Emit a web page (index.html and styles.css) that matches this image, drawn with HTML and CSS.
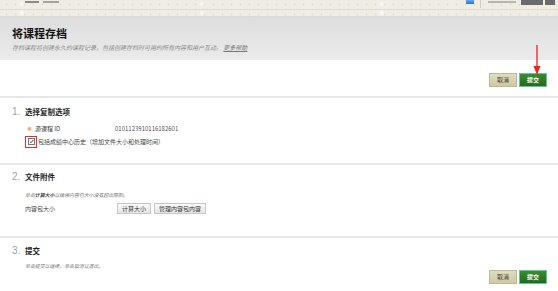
FILE: index.html
```html
<!DOCTYPE html>
<html lang="zh-CN">
<head>
<meta charset="utf-8">
<title>将课程存档</title>
<link rel="stylesheet" href="styles.css">
</head>
<body>
<div class="page">
  <div class="topbar">
    <div class="tb-row1">
      <div class="tb-left"><span class="tb-bar b1"></span><span class="tb-bar b2"></span></div>
      <div class="tb-right">
        <span class="tb-icon"></span>
        <span class="tb-sep"></span>
        <span class="tb-bar b3"></span>
        <span class="tb-dark d1"></span>
        <span class="tb-dark d2"></span>
      </div>
    </div>
    <div class="tb-row2"></div>
  </div>

  <div class="pagehead">
    <h1 class="title">将课程存档</h1>
    <p class="sub">存档课程将创建永久的课程记录，包括创建存档时可用的所有内容和用户互动。 <a class="help">更多帮助</a></p>
  </div>

  <div class="actions top-actions">
    <button class="btn btn-cancel">取消</button>
    <button class="btn btn-submit">提交</button>
    <svg class="arrow" width="10" height="32" viewBox="0 0 10 32">
      <line x1="5" y1="0" x2="5" y2="24" stroke="#e8251e" stroke-width="1.3"/>
      <polygon points="1.5,21 8.5,21 5,30" fill="#e8251e"/>
    </svg>
  </div>

  <section class="step step1">
    <div class="step-head"><span class="num">1.</span><span class="step-title">选择复制选项</span></div>
    <div class="row row-id">
      <span class="label"><span class="req">✻</span>源课程 ID</span>
      <span class="value">0101123910116182601</span>
    </div>
    <div class="row row-check">
      <span class="mark"><span class="cbox"><svg width="7" height="7" viewBox="0 0 7 7"><path d="M1.2 3.6 L2.9 5.2 L5.9 1.4" fill="none" stroke="#222" stroke-width="1.2"/></svg></span></span>
      <span class="check-label">包括成绩中心历史（增加文件大小和处理时间）</span>
    </div>
  </section>

  <section class="step step2">
    <div class="step-head"><span class="num">2.</span><span class="step-title">文件附件</span></div>
    <p class="hint">单击<b>计算大小</b>以确保内容包大小没有超出限制。</p>
    <div class="row row-size">
      <span class="label2">内容包大小</span>
      <button class="gbtn">计算大小</button>
      <button class="gbtn">管理内容包内容</button>
    </div>
  </section>

  <section class="step step3">
    <div class="step-head"><span class="num">3.</span><span class="step-title">提交</span></div>
    <p class="hint">单击提交以继续。单击取消以退出。</p>
    <div class="actions bottom-actions">
      <button class="btn btn-cancel">取消</button>
      <button class="btn btn-submit">提交</button>
    </div>
  </section>
</div>
</body>
</html>
```

FILE: styles.css
```css
html, body {
  margin: 0;
  padding: 0;
  background: #fff;
}
body {
  font-family: "Noto Sans CJK SC", "Noto Sans", sans-serif;
  color: #333;
  width: 558px;
  height: 291px;
  overflow: hidden;
}
.page {
  position: relative;
  width: 558px;
}

/* top strip */
.topbar {
  height: 16px;
  background-color: #efede4;
  border-bottom: 1px solid #d9d9d6;
  display: flex;
  flex-direction: column;
  background-image:
    radial-gradient(circle at 22px 4px, rgba(255,255,255,0.8) 0, rgba(255,255,255,0) 3px),
    radial-gradient(circle at 22px 13px, rgba(255,255,255,0.8) 0, rgba(255,255,255,0) 3px),
    radial-gradient(circle, #e0ddcf 0.8px, transparent 1.1px);
  background-size: 180px 16px, 180px 16px, 9px 5px;
  background-position: 0 0, 0 0, 2px 2px;
}
.tb-row1 {
  height: 9px;
  border-bottom: 1px solid #e0ddd0;
  display: flex;
  justify-content: space-between;
  align-items: flex-start;
}
.tb-row2 { flex: 1; }
.tb-left {
  display: flex;
  gap: 4px;
  padding-left: 25px;
  padding-top: 1px;
}
.tb-bar {
  display: block;
  height: 2px;
  background: #8a8a86;
}
.b1 { width: 14px; }
.b2 { width: 16px; background: #a5a5a0; }
.tb-right {
  display: flex;
  align-items: flex-start;
  padding-right: 3px;
}
.tb-icon {
  width: 8px;
  height: 4px;
  background: linear-gradient(#6aa8e8, #2f6fc8);
}
.tb-sep {
  width: 1px;
  height: 8px;
  background: #cfccc0;
  margin-left: 6px;
}
.b3 {
  width: 28px;
  height: 2px;
  margin: 1px 5px 0 7px;
  background: #b8b6ae;
}
.tb-dark {
  display: block;
  height: 5px;
  background: #6b6b6b;
}
.d1 { width: 22px; margin-right: 2px; }
.d2 { width: 10px; }

/* header */
.pagehead {
  height: 43px;
  box-sizing: border-box;
  padding: 9px 12px 0;
  background: linear-gradient(#dddddd, #ebebeb);
}
.title {
  margin: 0;
  font-size: 11px;
  line-height: 14px;
  font-weight: bold;
  color: #111;
}
.sub {
  margin: 4px 0 0;
  font-size: 6px;
  line-height: 8px;
  font-style: italic;
  color: #8a8a8a;
}
.help {
  color: #777;
  text-decoration: underline;
}

/* action buttons */
.actions {
  display: flex;
  justify-content: flex-end;
  gap: 2px;
  padding-right: 11px;
}
.top-actions {
  position: relative;
  height: 36px;
  box-sizing: border-box;
  padding-top: 13px;
}
.btn {
  width: 28px;
  height: 14px;
  padding: 0;
  font-family: inherit;
  font-size: 6px;
  line-height: 12px;
  box-sizing: border-box;
  cursor: pointer;
}
.btn-cancel {
  background: linear-gradient(#dfdcc0, #cdc9a3);
  border: 1px solid #bcb893;
  color: #3a3a30;
}
.btn-submit {
  background: linear-gradient(#3c8c2a, #25691a);
  border: 1px solid #5fc3b2;
  color: #fff;
  font-weight: bold;
}
.arrow {
  position: absolute;
  left: 532px;
  top: -15px;
}

/* steps */
.step {
  border-top: 2px solid #e8e8e8;
  box-sizing: border-box;
}
.step1 { height: 67px; padding-top: 7px; }
.step2 { height: 73px; padding-top: 5px; }
.step3 { height: 55px; padding-top: 6px; }
.step-head {
  display: flex;
  align-items: center;
  height: 12px;
  padding-left: 12px;
}
.num {
  width: 13px;
  font-family: "Liberation Sans", Arial, sans-serif;
  font-size: 10px;
  color: #a0a0a0;
}
.step-title {
  font-size: 7.5px;
  font-weight: bold;
  color: #1e1e1e;
}
.row {
  display: flex;
  align-items: center;
  font-size: 6px;
  color: #444;
}
.row-id {
  height: 12px;
  margin-top: 5px;
  padding-left: 27px;
}
.label {
  width: 88px;
  display: flex;
  align-items: center;
}
.req {
  color: #f08a1c;
  font-size: 6px;
  margin-right: 3px;
}
.value {
  color: #555;
}
.row-check {
  height: 13px;
  margin-top: 1px;
  padding-left: 25px;
}
.mark {
  width: 12px;
  height: 12px;
  box-sizing: border-box;
  border: 1px solid #e4312b;
  display: flex;
  align-items: center;
  justify-content: center;
}
.cbox {
  width: 7px;
  height: 7px;
  box-sizing: border-box;
  border: 1px solid #777;
  background: #fff;
  display: flex;
  align-items: center;
  justify-content: center;
}
.cbox svg { display: block; }
.check-label {
  margin-left: 1px;
}
.hint {
  margin: 9px 0 0;
  padding-left: 25px;
  font-size: 4.9px;
  line-height: 8px;
  font-style: italic;
  color: #777;
}
.hint b {
  color: #444;
}
.row-size {
  height: 11px;
  margin-top: 4px;
  padding-left: 25px;
}
.label2 {
  width: 92px;
}
.gbtn {
  height: 11px;
  padding: 0 4px;
  margin-right: 3px;
  font-family: inherit;
  font-size: 6px;
  line-height: 9px;
  color: #333;
  background: linear-gradient(#fafafa, #e6e6e6);
  border: 1px solid #c8c8c8;
  box-sizing: border-box;
}
.step3 .hint { margin-top: 6px; }
.bottom-actions {
  margin-top: 0;
}
```
